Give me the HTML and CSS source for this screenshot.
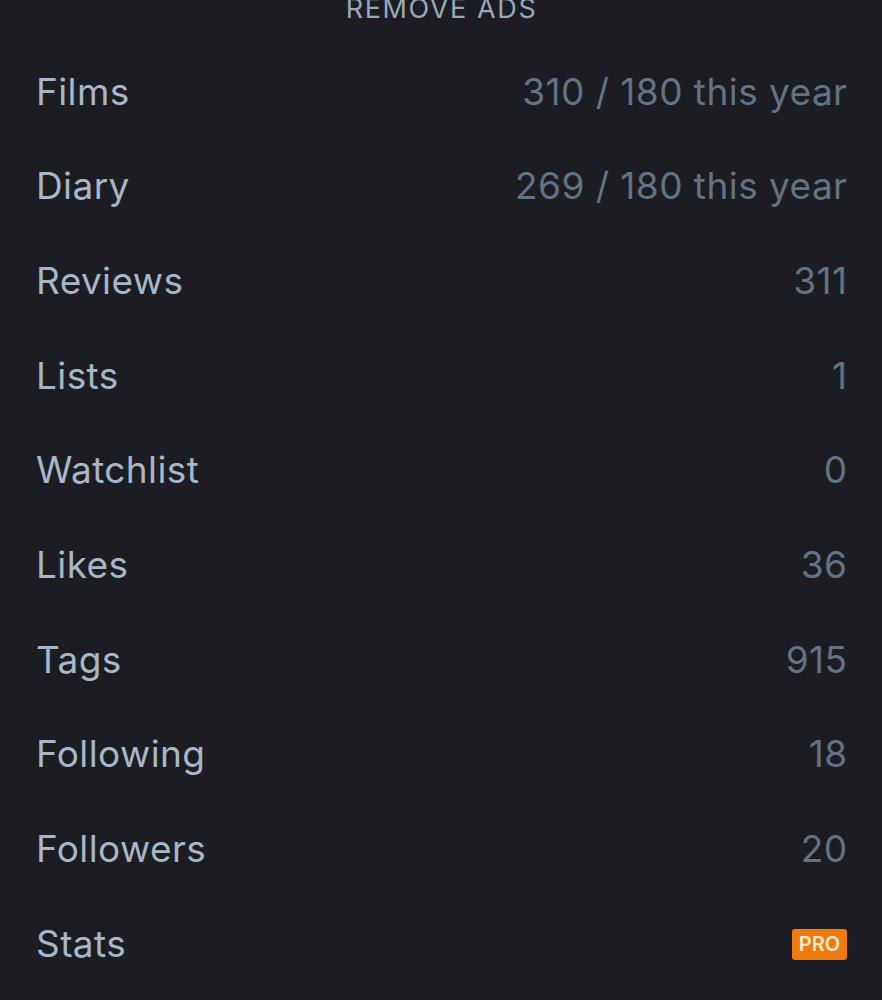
FILE: index.html
```html
<!DOCTYPE html>
<html lang="en">
<head>
<meta charset="utf-8">
<link rel="stylesheet" href="styles.css">
</head>
<body>
<div class="page">
  <div class="remove-ads">REMOVE ADS</div>
  <ul class="stats">
    <li class="row"><span class="label">Films</span><span class="value">310 / 180 this year</span></li>
    <li class="row"><span class="label">Diary</span><span class="value">269 / 180 this year</span></li>
    <li class="row"><span class="label">Reviews</span><span class="value">311</span></li>
    <li class="row"><span class="label">Lists</span><span class="value">1</span></li>
    <li class="row"><span class="label">Watchlist</span><span class="value">0</span></li>
    <li class="row"><span class="label">Likes</span><span class="value">36</span></li>
    <li class="row"><span class="label">Tags</span><span class="value">915</span></li>
    <li class="row"><span class="label">Following</span><span class="value">18</span></li>
    <li class="row"><span class="label">Followers</span><span class="value">20</span></li>
    <li class="row"><span class="label">Stats</span><span class="badge">PRO</span></li>
  </ul>
</div>
</body>
</html>
```

FILE: styles.css
```css
html, body {
  margin: 0;
  padding: 0;
  background: #1b1d22;
}
body {
  font-family: Inter, "Noto Sans", sans-serif;
  width: 882px;
  height: 1000px;
  overflow: hidden;
}
.page {
  padding: 0 35px 0 36px;
}
.remove-ads {
  height: 44px;
  margin-top: -13px;
  text-align: center;
  font-size: 27px;
  line-height: 44px;
  letter-spacing: 1.6px;
  color: #9aa7b6;
}
.stats {
  list-style: none;
  margin: 13px 0 0;
  padding: 0;
}
.row {
  height: 94.67px;
  display: flex;
  align-items: center;
  justify-content: space-between;
}
.label {
  font-size: 37px;
  color: #a8b6c5;
  letter-spacing: 0.4px;
}
.value {
  font-size: 37px;
  color: #647282;
  letter-spacing: 0.45px;
  margin-right: -0.5px;
}
.badge {
  background: #ef7b0f;
  color: #fde9cc;
  font-size: 20px;
  font-weight: 600;
  line-height: 31px;
  height: 31px;
  border-radius: 3px;
  width: 55px;
  text-align: center;
  margin-top: 2px;
}
```
